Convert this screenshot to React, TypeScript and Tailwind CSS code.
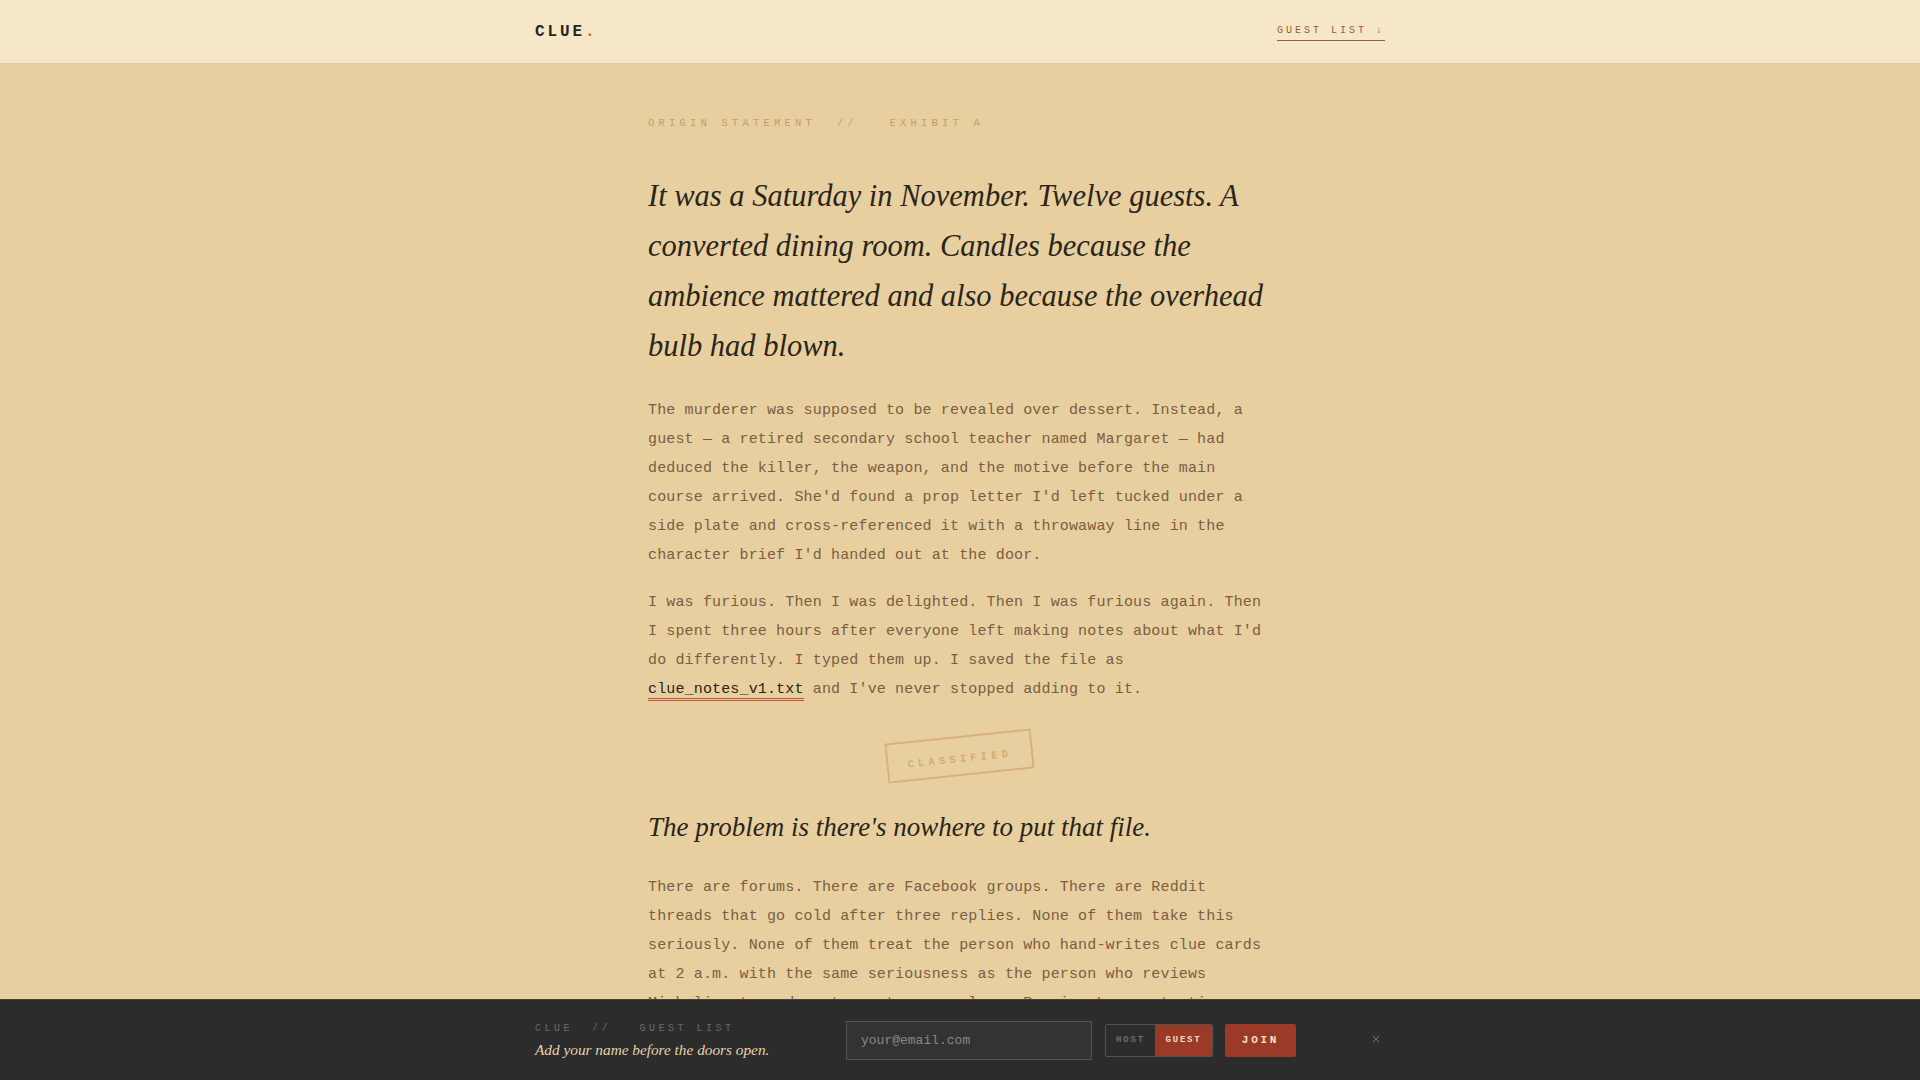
import { X } from 'lucide-react';
import { useState } from 'react';

const MONO = 'font-["Liberation_Mono",monospace]';
const SERIF = 'font-["Liberation_Serif",serif]';

const BODY = `${MONO} text-[15px] leading-[29px] tracking-[0.01em] text-[#7a5d43] w-[627px] space-y-[18px]`;

function Header() {
  return (
    <header className="h-16 bg-[#f6e7c8] border-b border-[#e2cb9c]">
      <div className="max-w-[850px] mx-auto h-full flex items-center justify-between">
        <span className={`${MONO} text-[16px] font-bold tracking-[0.18em] text-[#2a2418]`}>
          CLUE<span className="text-[#c0603f]">.</span>
        </span>
        <a
          href="#guest-list"
          className={`${MONO} text-[10px] tracking-[0.3em] text-[#9a5a44] border-b border-[#9a5a44] pb-[2px]`}
        >
          GUEST LIST ↓
        </a>
      </div>
    </header>
  );
}

function Stamp() {
  return (
    <div className="flex justify-center pt-[32px] pb-[31px]">
      <div className="-rotate-[6deg] border-2 border-[#d8b27c] px-[19px] py-[6px]">
        <span className={`${MONO} text-[10.5px] font-bold tracking-[0.4em] text-[#d4ab72]`}>
          CLASSIFIED
        </span>
      </div>
    </div>
  );
}

function GuestBar() {
  const [role, setRole] = useState<'host' | 'guest'>('guest');
  return (
    <div id="guest-list" className="fixed bottom-0 left-0 right-0 h-[81px] bg-[#2c2c2c] border-t border-[#4a3f2c]">
      <div className="max-w-[850px] mx-auto h-full flex items-center">
        <div className="w-[311px] shrink-0">
          <div className={`${MONO} text-[10px] tracking-[0.35em] text-[#6c6963] leading-4`}>
            CLUE&nbsp;&nbsp;//&nbsp;&nbsp;&nbsp;GUEST LIST
          </div>
          <div className={`${SERIF} italic text-[15.3px] leading-5 text-[#e8d3a8] mt-[3px]`}>
            Add your name before the doors open.
          </div>
        </div>
        <input
          placeholder="your@email.com"
          className={`${MONO} w-[246px] h-[39px] bg-[#333333] border border-[#555350] px-[14px] text-[13px] text-[#ddd] placeholder:text-[#8a8884] outline-none`}
        />
        <div className="ml-[13px] flex h-[33px] border border-[#555350] rounded-[2px] overflow-hidden">
          <button
            onClick={() => setRole('host')}
            className={`${MONO} w-[49px] pt-[1px] text-[9px] font-bold tracking-[0.2em] ${
              role === 'host' ? 'bg-[#9b3a26] text-[#f1dcc0]' : 'text-[#6f6c66]'
            }`}
          >
            HOST
          </button>
          <button
            onClick={() => setRole('guest')}
            className={`${MONO} w-[57px] pt-[1px] text-[9px] font-bold tracking-[0.2em] ${
              role === 'guest' ? 'bg-[#9b3a26] text-[#f1dcc0]' : 'text-[#6f6c66]'
            }`}
          >
            GUEST
          </button>
        </div>
        <button
          className={`${MONO} ml-[12px] w-[71px] h-[33px] rounded-[2px] bg-[#9b3a26] text-[#f6e2c6] text-[11px] font-bold tracking-[0.25em]`}
        >
          JOIN
        </button>
        <button className="ml-auto mr-[3px] -mt-[2px] text-[#77746e]">
          <X size={12} strokeWidth={2} />
        </button>
      </div>
    </div>
  );
}

export default function App() {
  return (
    <div className="min-h-screen bg-[#e8cfa0] overflow-x-hidden">
      <Header />
      <main className="w-[624px] mx-auto pt-[51px] pb-[160px]">
        <div className={`${MONO} text-[10.5px] tracking-[0.4em] text-[#bf9f6d] leading-4`}>
          ORIGIN STATEMENT&nbsp;&nbsp;//&nbsp;&nbsp;&nbsp;EXHIBIT A
        </div>

        <h1 className={`${SERIF} italic font-normal text-[30.5px] leading-[50px] text-[#2b2519] mt-[40px]`}>
          It was a Saturday in November. Twelve guests. A converted dining room. Candles because the
          ambience mattered and also because the overhead bulb had blown.
        </h1>

        <div className={`${BODY} mt-[25px]`}>
          <p>
            The murderer was supposed to be revealed over dessert. Instead, a guest — a retired secondary
            school teacher named Margaret — had deduced the killer, the weapon, and the motive before the main
            course arrived. She'd found a prop letter I'd left tucked under a side plate and cross-referenced
            it with a throwaway line in the character brief I'd handed out at the door.
          </p>
          <p>
            I was furious. Then I was delighted. Then I was furious again. Then I spent three hours after
            everyone left making notes about what I'd do differently. I typed them up. I saved the file as{' '}
            <span className="text-[#2b2519] border-b-[3px] border-double border-[#c0573c]">clue_notes_v1.txt</span> and
            I've never stopped adding to it.
          </p>
        </div>

        <Stamp />

        <h2 className={`${SERIF} italic font-normal text-[27px] leading-[40px] text-[#2b2519]`}>
          The problem is there's nowhere to put that file.
        </h2>

        <div className={`${BODY} mt-[26px]`}>
          <p>
            There are forums. There are Facebook groups. There are Reddit threads that go cold after three
            replies. None of them take this seriously. None of them treat the person who hand-writes clue cards
            at 2 a.m. with the same seriousness as the person who reviews Michelin-starred restaurants or
            analyses Premier League tactics.
          </p>
          <p>
            So I'm building the place. A home for hosts who write their own mysteries, and for guests who
            never want the night to end.
          </p>
        </div>
      </main>
      <GuestBar />
    </div>
  );
}
